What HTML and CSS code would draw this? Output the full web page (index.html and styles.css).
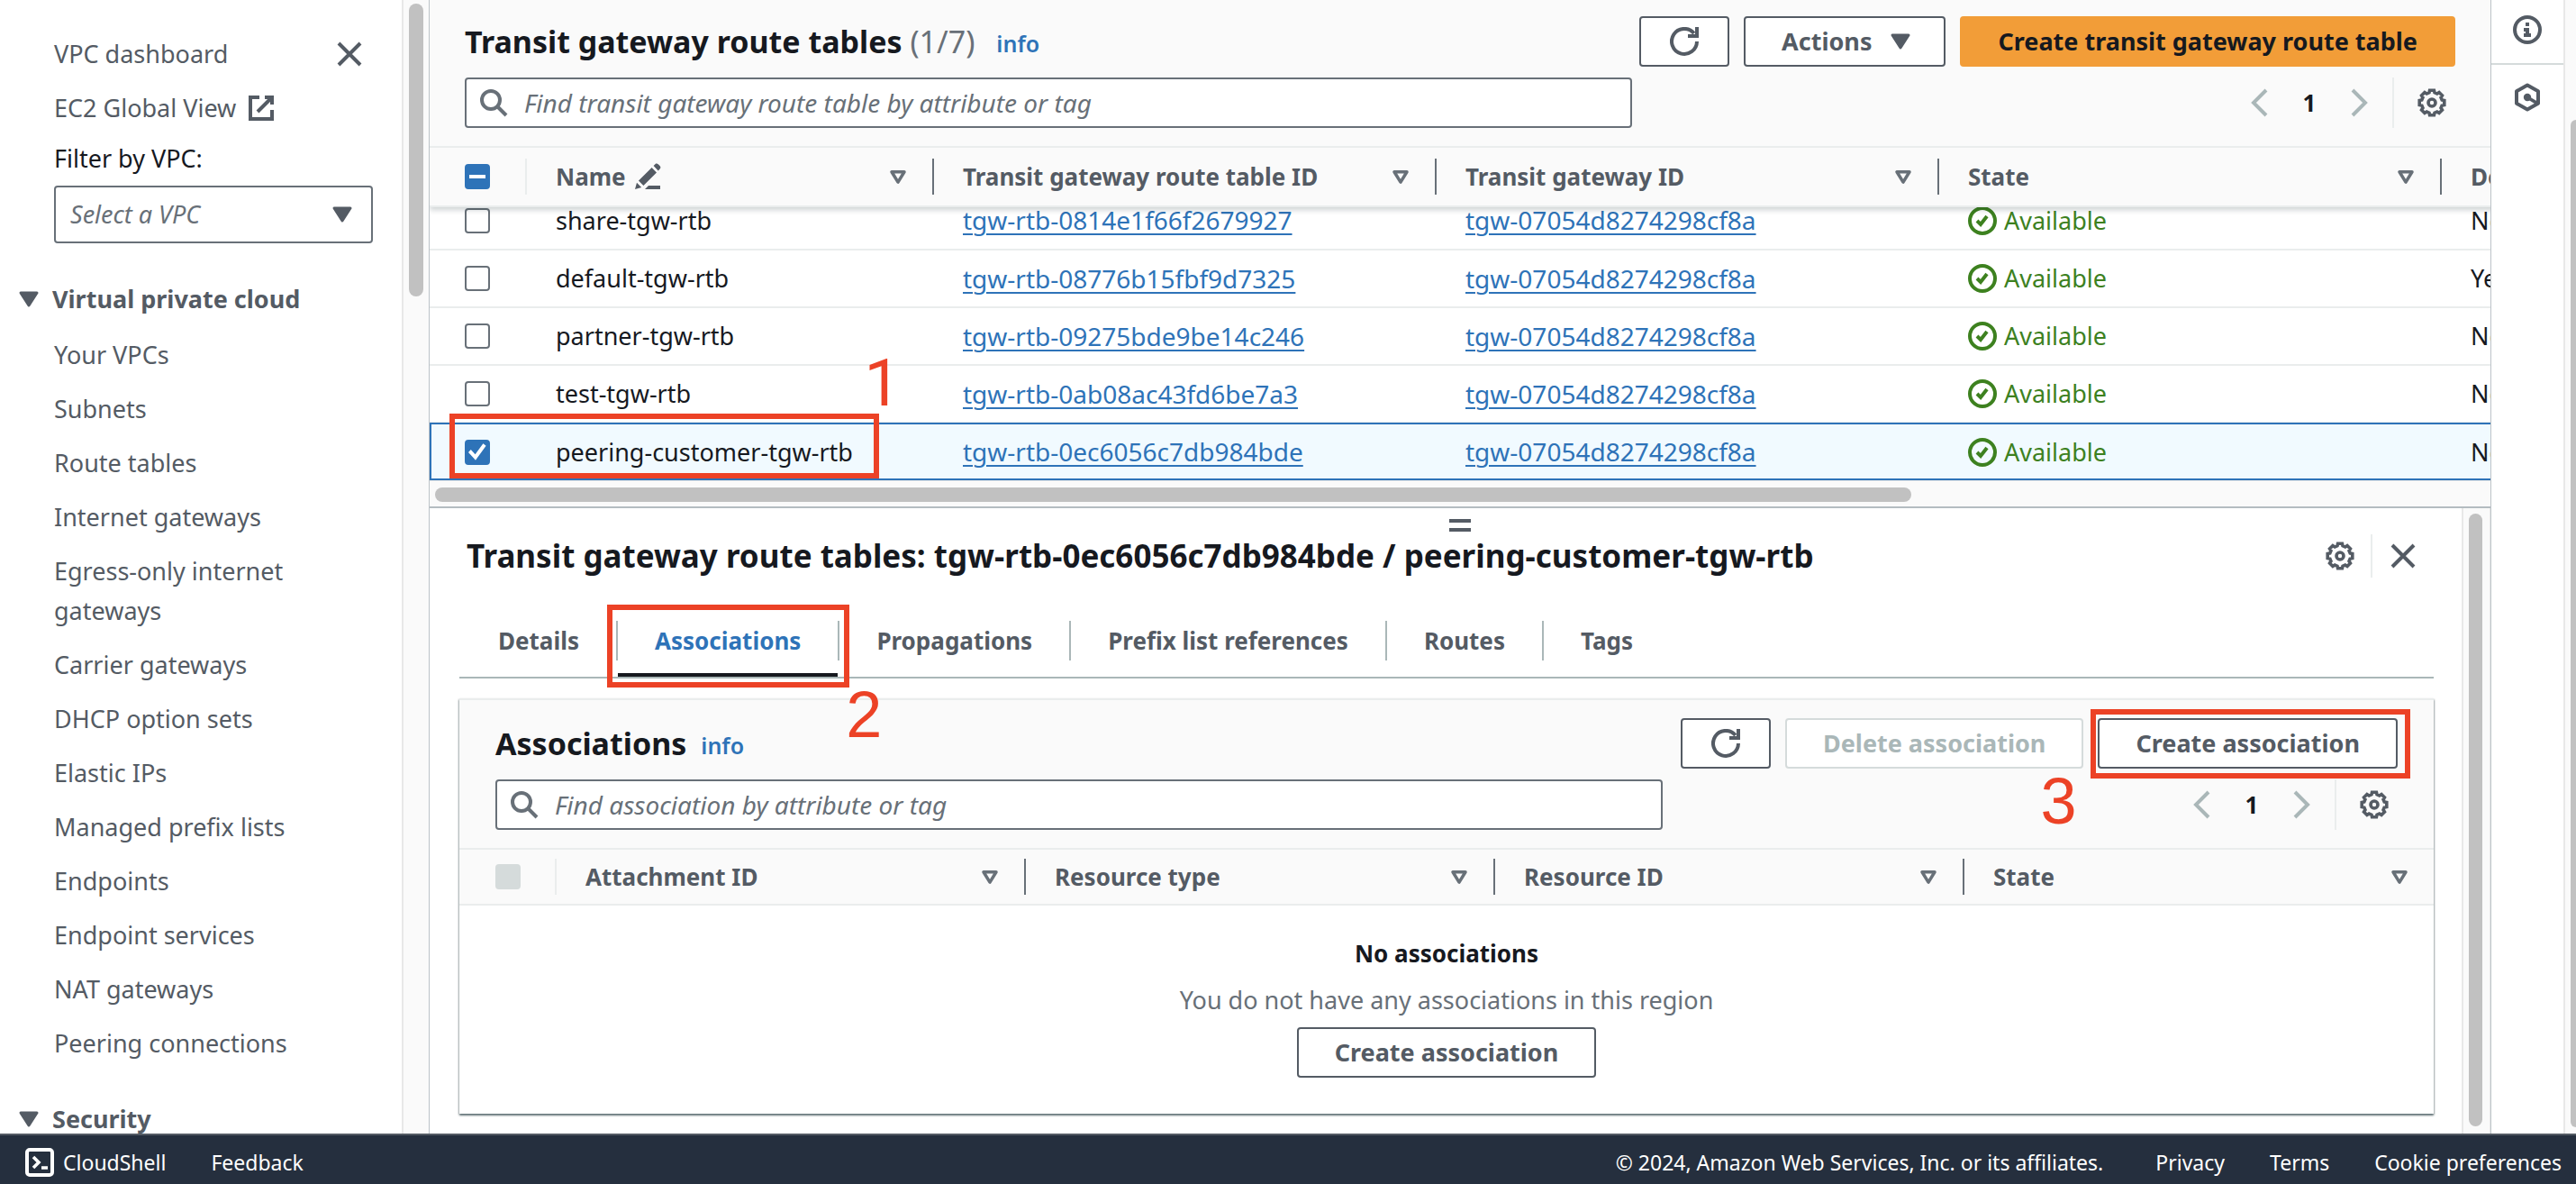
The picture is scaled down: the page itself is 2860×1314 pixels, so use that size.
FILE: index.html
```html
<!DOCTYPE html>
<html lang="en">
<head>
<meta charset="utf-8">
<title>Transit gateway route tables | VPC Console</title>
<link rel="stylesheet" href="styles.css">
</head>
<body>
<svg class="sprite" aria-hidden="true">
  <symbol id="i-close" viewBox="0 0 16 16"><path d="M2 2l12 12M14 2L2 14" fill="none" stroke="currentColor" stroke-width="2"/></symbol>
  <symbol id="i-external" viewBox="0 0 16 16"><path d="M7 2H2v12h12V9M10 2h4v4M6 10l8-8" fill="none" stroke="currentColor" stroke-width="2"/></symbol>
  <symbol id="i-caret" viewBox="0 0 16 16"><path d="M3.5 4.5h9L8 11.500z" fill="currentColor" stroke="currentColor" stroke-width="1.500" stroke-linejoin="round"/></symbol>
  <symbol id="i-filter" viewBox="0 0 16 16"><path d="M4 5h8l-4 6.500z" fill="none" stroke="currentColor" stroke-width="2" stroke-linejoin="round"/></symbol>
  <symbol id="i-search" viewBox="0 0 16 16"><g fill="none" stroke="currentColor" stroke-width="2"><circle cx="6.500" cy="6.500" r="5"/><path d="M10 10l5 5"/></g></symbol>
  <symbol id="i-refresh" viewBox="0 0 16 16"><path d="M15 8a7 7 0 1 1-1.600-4.500M10 5h5V0" fill="none" stroke="currentColor" stroke-width="2"/></symbol>
  <symbol id="i-left" viewBox="0 0 16 16"><path d="M12 1L5 8l7 7" fill="none" stroke="currentColor" stroke-width="2"/></symbol>
  <symbol id="i-right" viewBox="0 0 16 16"><path d="M4 1l7 7-7 7" fill="none" stroke="currentColor" stroke-width="2"/></symbol>
  <symbol id="i-gear" viewBox="0 0 16 16"><g fill="none" stroke="currentColor" stroke-width="1.800"><path d="M13.600 6.500L14.890 6.780V9.220L13.600 9.500L13.020 10.900L13.730 12.010L12.010 13.730L10.900 13.020L9.500 13.600L9.220 14.890H6.780L6.500 13.600L5.100 13.020L3.990 13.730L2.270 12.010L2.980 10.900L2.400 9.500L1.110 9.220V6.780L2.400 6.500L2.980 5.100L2.270 3.990L3.990 2.270L5.100 2.980L6.500 2.400L6.780 1.110H9.220L9.500 2.400L10.900 2.980L12.010 2.270L13.730 3.990L13.020 5.100Z"/><circle cx="8" cy="8" r="2"/></g></symbol>
  <symbol id="i-edit" viewBox="0 0 16 16"><path d="M1 15l1-3.600 2.600 2.600zM3 10.300L10.300 3 13 5.700 5.700 13zM11.300 2L12.600.800Q13.200.500 14 1.200L14.900 2.100Q15.500 2.900 15 3.500L13.900 4.700zM6.500 15l2-2H15v2z" fill="currentColor"/></symbol>
  <symbol id="i-ok" viewBox="0 0 16 16"><g fill="none" stroke="currentColor" stroke-width="2"><circle cx="8" cy="8" r="7"/><path d="M5 8l2 2 3.500-4.500"/></g></symbol>
  <symbol id="i-info" viewBox="0 0 16 16"><circle cx="8" cy="8" r="7" fill="none" stroke="currentColor" stroke-width="2"/><path d="M7 4h2v2H7zM6 7h3v3h1v2H6v-2h1V9H6z" fill="currentColor"/></symbol>
  <symbol id="i-hex" viewBox="0 0 16 16"><path d="M8 1.200l6 3.400v6.800l-6 3.400-6-3.400V4.600z" fill="none" stroke="currentColor" stroke-width="2" stroke-linejoin="round"/><circle cx="8" cy="8" r="2.100" fill="currentColor"/><path d="M8 8l5.500 3.300" stroke="currentColor" stroke-width="1.800"/></symbol>
  <symbol id="i-shell" viewBox="0 0 16 16"><rect x="1" y="1" width="14" height="14" rx="1.500" fill="none" stroke="currentColor" stroke-width="2"/><path d="M4.500 5L7.500 8l-3 3M9 11h3.500" fill="none" stroke="currentColor" stroke-width="1.800"/></symbol>
</svg>

<div class="workspace">
  <aside class="sidebar">
    <nav class="nav" aria-label="VPC">
      <div class="nav-top">
        <a href="#">VPC dashboard</a>
        <button class="icon-btn" type="button" aria-label="Close navigation"><svg class="icon"><use href="#i-close"/></svg></button>
      </div>
      <a class="nav-global" href="#">EC2 Global View <svg class="icon"><use href="#i-external"/></svg></a>
      <label class="filter-label" for="vpc">Filter by VPC:</label>
      <div class="select">
        <select id="vpc"><option>Select a VPC</option></select>
        <svg class="icon"><use href="#i-caret"/></svg>
      </div>
      <h2 class="nav-head"><svg class="icon"><use href="#i-caret"/></svg>Virtual private cloud</h2>
      <ul class="nav-list">
        <li><a href="#">Your VPCs</a></li>
        <li><a href="#">Subnets</a></li>
        <li><a href="#">Route tables</a></li>
        <li><a href="#">Internet gateways</a></li>
        <li><a href="#">Egress-only internet gateways</a></li>
        <li><a href="#">Carrier gateways</a></li>
        <li><a href="#">DHCP option sets</a></li>
        <li><a href="#">Elastic IPs</a></li>
        <li><a href="#">Managed prefix lists</a></li>
        <li><a href="#">Endpoints</a></li>
        <li><a href="#">Endpoint services</a></li>
        <li><a href="#">NAT gateways</a></li>
        <li><a href="#">Peering connections</a></li>
      </ul>
      <h2 class="nav-head"><svg class="icon"><use href="#i-caret"/></svg>Security</h2>
    </nav>
    <div class="gutter gutter-nav"><div class="thumb"></div></div>
  </aside>

  <main class="main">
    <section class="tables">
      <header class="toolbar">
        <div class="toolbar-row">
          <h1 class="title">Transit gateway route tables <span class="count">(1/7)</span></h1>
          <a class="info" href="#">info</a>
          <div class="actions">
            <button class="btn btn-icon" type="button" aria-label="Refresh"><svg class="icon"><use href="#i-refresh"/></svg></button>
            <button class="btn btn-menu" type="button">Actions <svg class="icon"><use href="#i-caret"/></svg></button>
            <button class="btn btn-primary" type="button">Create transit gateway route table</button>
          </div>
        </div>
        <div class="toolbar-row">
          <label class="search"><svg class="icon"><use href="#i-search"/></svg><input type="search" aria-label="Find transit gateway route table" placeholder="Find transit gateway route table by attribute or tag"></label>
          <div class="pager">
            <button class="icon-btn off" type="button" aria-label="Previous page"><svg class="icon"><use href="#i-left"/></svg></button>
            <span class="page">1</span>
            <button class="icon-btn off" type="button" aria-label="Next page"><svg class="icon"><use href="#i-right"/></svg></button>
            <button class="icon-btn prefs" type="button" aria-label="Preferences"><svg class="icon"><use href="#i-gear"/></svg></button>
          </div>
        </div>
      </header>
      <div class="grid-clip">
        <table class="grid grid-head">
          <colgroup><col class="c-check"><col class="c-name"><col class="c-data"><col class="c-data"><col class="c-data"><col class="c-data"></colgroup>
          <thead><tr>
            <th><div class="th th-check"><input class="check mixed" type="checkbox" aria-label="Select all route tables"></div></th>
            <th><div class="th">Name <svg class="icon icon-edit"><use href="#i-edit"/></svg><button class="sort" type="button" aria-label="Sort by name"><svg class="icon"><use href="#i-filter"/></svg></button></div></th>
            <th><div class="th">Transit gateway route table ID<button class="sort" type="button" aria-label="Sort by route table ID"><svg class="icon"><use href="#i-filter"/></svg></button></div></th>
            <th><div class="th">Transit gateway ID<button class="sort" type="button" aria-label="Sort by gateway ID"><svg class="icon"><use href="#i-filter"/></svg></button></div></th>
            <th><div class="th">State<button class="sort" type="button" aria-label="Sort by state"><svg class="icon"><use href="#i-filter"/></svg></button></div></th>
            <th><div class="th">Default association route table</div></th>
          </tr></thead>
        </table>
        <table class="grid grid-body">
          <colgroup><col class="c-check"><col class="c-name"><col class="c-data"><col class="c-data"><col class="c-data"><col class="c-data"></colgroup>
          <tbody>
            <tr><td><input class="check" type="checkbox" aria-label="share-tgw-rtb"></td><td>share-tgw-rtb</td><td><a href="#">tgw-rtb-0814e1f66f2679927</a></td><td><a href="#">tgw-07054d8274298cf8a</a></td><td><span class="ok"><svg class="icon"><use href="#i-ok"/></svg>Available</span></td><td>No</td></tr>
            <tr><td><input class="check" type="checkbox" aria-label="default-tgw-rtb"></td><td>default-tgw-rtb</td><td><a href="#">tgw-rtb-08776b15fbf9d7325</a></td><td><a href="#">tgw-07054d8274298cf8a</a></td><td><span class="ok"><svg class="icon"><use href="#i-ok"/></svg>Available</span></td><td>Yes</td></tr>
            <tr><td><input class="check" type="checkbox" aria-label="partner-tgw-rtb"></td><td>partner-tgw-rtb</td><td><a href="#">tgw-rtb-09275bde9be14c246</a></td><td><a href="#">tgw-07054d8274298cf8a</a></td><td><span class="ok"><svg class="icon"><use href="#i-ok"/></svg>Available</span></td><td>No</td></tr>
            <tr><td><input class="check" type="checkbox" aria-label="test-tgw-rtb"></td><td>test-tgw-rtb</td><td><a href="#">tgw-rtb-0ab08ac43fd6be7a3</a></td><td><a href="#">tgw-07054d8274298cf8a</a></td><td><span class="ok"><svg class="icon"><use href="#i-ok"/></svg>Available</span></td><td>No</td></tr>
            <tr class="selected"><td><input class="check" type="checkbox" checked aria-label="peering-customer-tgw-rtb"></td><td>peering-customer-tgw-rtb</td><td><a href="#">tgw-rtb-0ec6056c7db984bde</a></td><td><a href="#">tgw-07054d8274298cf8a</a></td><td><span class="ok"><svg class="icon"><use href="#i-ok"/></svg>Available</span></td><td>No</td></tr>
          </tbody>
        </table>
        <div class="mark mark-row"><b class="step">1</b></div>
      </div>
      <div class="gutter-x"><div class="thumb"></div></div>
    </section>

    <section class="split">
      <button class="handle" type="button" aria-label="Resize panel"></button>
      <div class="split-body">
        <header class="split-head">
          <h2 class="title">Transit gateway route tables: tgw-rtb-0ec6056c7db984bde / peering-customer-tgw-rtb</h2>
          <button class="icon-btn" type="button" aria-label="Panel preferences"><svg class="icon"><use href="#i-gear"/></svg></button>
          <span class="rule"></span>
          <button class="icon-btn" type="button" aria-label="Close panel"><svg class="icon"><use href="#i-close"/></svg></button>
        </header>
        <ul class="tabs">
          <li><button type="button">Details</button></li>
          <li><button class="active" type="button">Associations</button><div class="mark mark-tab"><b class="step">2</b></div></li>
          <li><button type="button">Propagations</button></li>
          <li><button type="button">Prefix list references</button></li>
          <li><button type="button">Routes</button></li>
          <li><button type="button">Tags</button></li>
        </ul>
        <section class="card">
          <header class="toolbar">
            <div class="toolbar-row">
              <h3 class="title">Associations</h3>
              <a class="info" href="#">info</a>
              <div class="actions">
                <button class="btn btn-icon" type="button" aria-label="Refresh associations"><svg class="icon"><use href="#i-refresh"/></svg></button>
                <button class="btn" type="button" disabled>Delete association</button>
                <div class="marked"><button class="btn" type="button">Create association</button><div class="mark mark-btn"><b class="step">3</b></div></div>
              </div>
            </div>
            <div class="toolbar-row">
              <label class="search"><svg class="icon"><use href="#i-search"/></svg><input type="search" aria-label="Find association" placeholder="Find association by attribute or tag"></label>
              <div class="pager">
                <button class="icon-btn off" type="button" aria-label="Previous page"><svg class="icon"><use href="#i-left"/></svg></button>
                <span class="page">1</span>
                <button class="icon-btn off" type="button" aria-label="Next page"><svg class="icon"><use href="#i-right"/></svg></button>
                <button class="icon-btn prefs" type="button" aria-label="Association preferences"><svg class="icon"><use href="#i-gear"/></svg></button>
              </div>
            </div>
          </header>
          <table class="grid grid-assoc">
            <colgroup><col class="c-check"><col><col><col><col></colgroup>
            <thead><tr>
              <th><div class="th th-check"><input class="check" type="checkbox" disabled aria-label="Select all associations"></div></th>
              <th><div class="th">Attachment ID<button class="sort" type="button" aria-label="Sort by attachment ID"><svg class="icon"><use href="#i-filter"/></svg></button></div></th>
              <th><div class="th">Resource type<button class="sort" type="button" aria-label="Sort by resource type"><svg class="icon"><use href="#i-filter"/></svg></button></div></th>
              <th><div class="th">Resource ID<button class="sort" type="button" aria-label="Sort by resource ID"><svg class="icon"><use href="#i-filter"/></svg></button></div></th>
              <th><div class="th">State<button class="sort" type="button" aria-label="Sort by state"><svg class="icon"><use href="#i-filter"/></svg></button></div></th>
            </tr></thead>
          </table>
          <div class="empty">
            <strong>No associations</strong>
            <p>You do not have any associations in this region</p>
            <button class="btn" type="button">Create association</button>
          </div>
        </section>
      </div>
      <div class="gutter gutter-split"><div class="thumb"></div></div>
    </section>
  </main>

  <aside class="tools">
    <button type="button" aria-label="Info"><svg class="icon"><use href="#i-info"/></svg></button>
    <button type="button" aria-label="Diagnostics"><svg class="icon"><use href="#i-hex"/></svg></button>
  </aside>
  <div class="gutter gutter-page"><div class="thumb"></div></div>
</div>

<footer class="footer">
  <a href="#"><svg class="icon"><use href="#i-shell"/></svg>CloudShell</a>
  <a href="#">Feedback</a>
  <span class="copyright">© 2024, Amazon Web Services, Inc. or its affiliates.</span>
  <a href="#">Privacy</a>
  <a href="#">Terms</a>
  <a href="#">Cookie preferences</a>
</footer>
</body>
</html>
```

FILE: styles.css
```css
:root {
  --text: #16191f;
  --grey: #545b64;
  --muted: #687078;
  --blue: #2e73b8;
  --line: #eaeded;
  --line-dark: #aab7b8;
  --panel: #fafafa;
  --green: #3d811f;
  --mark: #ec4226;
}

* { box-sizing: border-box; }

body {
  margin: 0;
  height: 100vh;
  display: flex;
  flex-direction: column;
  overflow: hidden;
  background: #fff;
  color: var(--text);
  font: 27px/44px "Noto Sans", "Open Sans", sans-serif;
}

h1, h2, h3, p, ul { margin: 0; padding: 0; }
ul { list-style: none; }
a { color: var(--blue); }
button, input, select { font: inherit; color: inherit; margin: 0; }
button { background: none; border: 0; padding: 0; }

.sprite { display: none; }
.icon { width: 32px; height: 32px; flex: none; display: block; }
.icon-btn { color: var(--grey); }
.off { color: var(--line-dark); }

.workspace { flex: 1; min-height: 0; display: flex; }

/* Scroll gutters */
.gutter { flex: none; background: var(--panel); border-left: 2px solid #e8e8e8; }
.thumb { background: #c1c1c1; border-radius: 8px; }
.gutter-nav { width: 30px; padding: 4px 6px; }
.gutter-nav .thumb { height: 26%; }
.gutter-split { width: 32px; padding: 6px 8px 8px 6px; border-right: 1px solid #e8e8e8; }
.gutter-split .thumb { height: 100%; }
.gutter-page { width: 14px; padding: 133px 0 7px 6px; }
.gutter-page .thumb { height: 100%; border-radius: 8px 0 0 8px; }
.gutter-x { height: 29px; padding: 7px 6px; background: var(--panel); border-top: 1px solid #e8e8e8; }
.gutter-x .thumb { width: 72%; height: 16px; }

/* Navigation */
.sidebar { flex: none; width: 476px; display: flex; }
.nav { flex: 1; padding: 38px 32px 0 60px; overflow: hidden; color: var(--grey); }
.nav a { color: inherit; text-decoration: none; }
.nav-top { display: flex; justify-content: space-between; align-items: center; padding-right: 10px; }
.nav .nav-global { display: flex; align-items: center; gap: 12px; margin: 16px 0 12px; }
.filter-label { display: block; color: var(--text); margin-bottom: 8px; }
.select { position: relative; }
.select select {
  width: 100%;
  height: 64px;
  padding: 0 16px;
  appearance: none;
  background: #fff;
  border: 2px solid var(--muted);
  border-radius: 4px;
  color: var(--muted);
  font-style: italic;
}
.select .icon { position: absolute; right: 18px; top: 16px; pointer-events: none; }
.nav-head {
  display: flex;
  align-items: center;
  gap: 10px;
  margin: 40px 0 18px -44px;
  font-size: 27px;
}
.nav-list { display: grid; gap: 16px; padding-right: 60px; }

/* Main column */
.main {
  flex: 1;
  min-width: 0;
  display: flex;
  flex-direction: column;
  border-left: 1px solid #bcc3c8;
  border-right: 1px solid #bcc3c8;
}
.tables { flex: none; border-bottom: 2px solid #b4bcc1; }

.toolbar { background: var(--panel); padding: 18px 39px 20px; display: grid; gap: 12px; }
.toolbar-row { display: flex; align-items: center; height: 56px; }
.title { font-size: 34px; font-weight: 700; white-space: nowrap; }
.count { font-weight: 400; color: var(--muted); margin-right: 8px; }
.info { font-size: 25px; font-weight: 600; text-decoration: none; margin-left: 16px; padding-top: 4px; }
.actions { margin-left: auto; display: flex; gap: 16px; }

.btn {
  height: 56px;
  padding: 0 40px;
  display: flex;
  align-items: center;
  gap: 16px;
  background: #fff;
  border: 2px solid var(--grey);
  border-radius: 4px;
  color: var(--grey);
  font-weight: 700;
  white-space: nowrap;
}
.btn:disabled { border-color: #d5dbdb; color: var(--line-dark); }
.btn-icon { padding: 0 32px; }
.btn-menu { padding-right: 32px; }
.btn-primary { background: #f29d38; border-color: #f29d38; color: var(--text); }

.search {
  flex: 0 1 1296px;
  height: 56px;
  padding: 0 14px;
  display: flex;
  align-items: center;
  gap: 18px;
  background: #fff;
  border: 2px solid var(--muted);
  border-radius: 4px;
  color: var(--muted);
}
.search input { flex: 1; border: 0; padding: 0; background: none; outline: 0; font-size: 28px; }
.search input::placeholder { color: var(--muted); font-style: italic; opacity: 1; }

.pager { margin-left: auto; height: 56px; display: flex; align-items: center; }
.page { width: 80px; text-align: center; font-weight: 700; font-size: 26px; }
.prefs {
  height: 56px;
  margin-left: 20px;
  padding: 0 10px 0 26px;
  border-left: 2px solid var(--line);
}

/* Data grids */
.grid { border-collapse: collapse; table-layout: fixed; }
.grid-head, .grid-body { width: 2792px; }
.grid-head { position: relative; z-index: 1; background: var(--panel); box-shadow: 0 3px 6px rgba(0, 28, 36, .2); }
.grid-clip { position: relative; overflow: hidden; }
.c-check { width: 108px; }
.c-name { width: 452px; }
.c-data { width: 558px; }

.grid th { padding: 0; height: 62px; border-top: 2px solid var(--line); border-bottom: 2px solid var(--line); text-align: left; font-size: 26px; background: var(--panel); }
.grid-head th { height: 66px; }
.th {
  height: 40px;
  padding: 0 24px 0 32px;
  display: flex;
  align-items: center;
  gap: 8px;
  border-right: 2px solid var(--muted);
  color: var(--grey);
  white-space: nowrap;
}
.th-check { padding-left: 39px; border-color: var(--line); }
.sort .icon { width: 28px; height: 28px; }
.grid th:last-child .th { border-right: 0; }
.sort { margin-left: auto; color: var(--muted); }

.grid td { padding: 0 32px; height: 64px; border-bottom: 2px solid var(--line); white-space: nowrap; }
.grid td:first-child { padding-left: 39px; }
.grid-body { margin-top: -17px; }
.grid td a { text-underline-offset: 4px; text-decoration-thickness: 2px; font-size: 28px; }
.ok { display: flex; align-items: center; gap: 8px; color: var(--green); }
.selected { background: #f1faff; outline: 2px solid var(--blue); outline-offset: -2px; }
.grid .selected td { border-bottom: 0; }

.check {
  display: grid;
  place-items: center;
  width: 28px;
  height: 28px;
  appearance: none;
  background: #fff;
  border: 2px solid var(--muted);
  border-radius: 4px;
}
.check:checked, .check.mixed { background: var(--blue); border-color: var(--blue); }
.check:disabled { background: #d5dbdb; border-color: #d5dbdb; }
.check.mixed::before { content: ""; width: 18px; height: 4px; background: #fff; }
.check:checked::before {
  content: "";
  width: 20px;
  height: 20px;
  background: #fff;
  clip-path: polygon(0 52%, 14% 38%, 38% 64%, 82% 4%, 98% 16%, 40% 96%);
}

/* Split panel */
.split { flex: 1; min-height: 0; display: flex; position: relative; }
.handle {
  position: absolute;
  top: 12px;
  left: 50%;
  width: 24px;
  height: 14px;
  margin-left: -12px;
  border-top: 4px solid var(--grey);
  border-bottom: 4px solid var(--grey);
}
.split-body { flex: 1; min-width: 0; padding: 29px 31px 20px 33px; overflow: hidden; }
.split-head { display: flex; align-items: center; height: 48px; padding: 0 18px 0 8px; }
.split-head .title { margin-right: auto; font-size: 35px; }
.rule { width: 2px; height: 48px; margin: 0 18px; background: var(--line); }

.tabs { display: flex; margin-top: 30px; padding-left: 2px; border-bottom: 2px solid var(--line-dark); }
.tabs li { position: relative; display: flex; align-items: flex-start; }
.tabs li + li::before { content: ""; width: 2px; height: 44px; margin-top: 18px; background: var(--line-dark); }
.tabs button {
  padding: 18px 41px 14px;
  border-bottom: 4px solid transparent;
  color: var(--grey);
  font-size: 26px;
  font-weight: 700;
  line-height: 44px;
}
.tabs .active { color: var(--blue); border-color: var(--text); }

.card {
  margin-top: 22px;
  background: #fff;
  border-top: 2px solid var(--line);
  box-shadow: 0 2px 2px rgba(0, 28, 36, .5), 1px 1px 2px rgba(0, 28, 36, .2), -1px 1px 2px rgba(0, 28, 36, .2);
}
.card .toolbar { padding: 20px 40px; }
.card .th-check { padding-left: 40px; }
.grid-assoc { width: 100%; }
.empty { display: flex; flex-direction: column; align-items: center; gap: 8px; padding: 31px 0 40px; }
.empty strong { font-size: 26px; }
.empty p { color: var(--muted); }

/* Walkthrough markers */
.mark { position: absolute; border: 6px solid var(--mark); pointer-events: none; z-index: 2; }
.step { position: absolute; color: var(--mark); font: 72px/72px "Liberation Sans", Arial, sans-serif; }
.mark-row { left: 22px; bottom: 2px; width: 477px; height: 72px; }
.mark-row .step { right: -30px; bottom: 63px; font-family: Roboto, sans-serif; }
.mark-tab { inset: 0 -13px -12px -10px; }
.mark-tab .step { right: -42px; top: 80px; }
.marked { position: relative; }
.mark-btn { inset: -10px -14px -11px -8px; }
.mark-btn .step { left: -62px; top: 60px; }

/* Tools rail */
.tools { flex: none; width: 80px; }
.tools button { width: 100%; height: 72px; display: grid; place-items: center; color: var(--grey); }
.tools button:first-child { padding-bottom: 4px; border-bottom: 2px solid #d5dbdb; }

/* Footer */
.footer {
  flex: none;
  height: 56px;
  padding: 8px 16px 0 28px;
  display: flex;
  gap: 50px;
  background: #252f3e;
  border-top: 2px solid var(--grey);
  color: #fff;
  font-size: 23px;
  white-space: nowrap;
}
.footer a { color: inherit; text-decoration: none; display: flex; align-items: center; gap: 10px; }
.footer a, .footer span { height: 44px; }
.copyright { margin-left: auto; margin-right: 8px; }
```
